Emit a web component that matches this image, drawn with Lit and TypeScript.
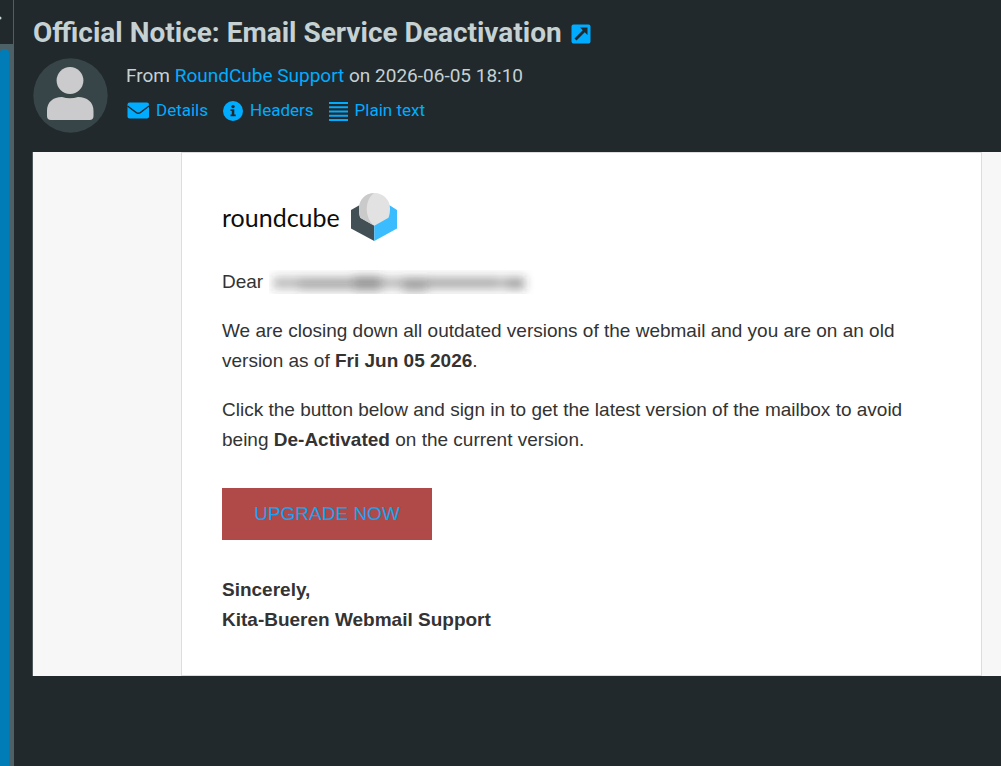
import { LitElement, html, css, svg } from "lit";
import { customElement } from "lit/decorators.js";

@customElement("message-header")
class MessageHeader extends LitElement {
  static styles = css`
    :host { display: block; color: #c5d1d3; }
    svg { display: block; flex: none; }
    a { color: #00acff; text-decoration: none; }
    .title {
      display: flex; align-items: center; gap: 9px;
      margin: 0; font-size: 28px; line-height: 36px; font-weight: 700;
    }
    .popout { padding-top: 2px; }
    .summary { display: flex; gap: 18px; margin-top: 7px; }
    .avatar { width: 75px; height: 75px; }
    .from { margin: 0; font-size: 19px; line-height: 36px; }
    .actions { display: flex; gap: 14px; }
    .action { display: flex; align-items: center; gap: 6px; font-size: 17px; line-height: 32px; }
  `;

  render() {
    return html`
      <h1 class="title">
        <span>Official Notice: Email Service Deactivation</span>
        <a class="popout" href="#" aria-label="Open in new window">
          <svg width="20" height="20" viewBox="0 0 20 20">
            <rect x="0.5" y="0.5" width="19" height="19" rx="2" fill="#00acff" />
            <path d="M4.500 15.500 L14 6" stroke="#21292c" stroke-width="2.8" />
            <path d="M9 3.500 H16.500 V11 Z" fill="#21292c" />
          </svg>
        </a>
      </h1>
      <div class="summary">
        <svg class="avatar" viewBox="0 0 75 75" role="img" aria-label="Sender">
          <circle cx="37.5" cy="37.5" r="37.2" fill="#374549" />
          <circle cx="37" cy="22.5" r="13.4" fill="#cbcbcd" />
          <path d="M14 53 C14 44 20 39 29 39 Q37 41.5 45 39 C54 39 60.500 44 60.500 53 V58 Q60.500 62 56.500 62 H18 Q14 62 14 58 Z" fill="#cbcbcd" />
        </svg>
        <div>
          <p class="from">From <a href="#">RoundCube Support</a> on 2026-06-05 18:10</p>
          <nav class="actions">
            <a class="action" href="#">
              <svg width="24" height="22" viewBox="0 0 24 22">
                <rect x="1.500" y="3.500" width="21.500" height="16" rx="2" fill="#00acff" />
                <path d="M1.500 7 L10.300 13.600 Q12.300 14.900 14.300 13.600 L23 7" fill="none" stroke="#21292c" stroke-width="1.300" />
              </svg>
              <span>Details</span>
            </a>
            <a class="action" href="#">
              <svg width="22" height="22" viewBox="0 0 22 22">
                <circle cx="11" cy="12" r="10" fill="#00acff" />
                <circle cx="11" cy="7.600" r="1.700" fill="#21292c" />
                <path d="M8.500 10.300 H12.300 V15.500 H13.700 V17.300 H8.500 V15.500 H9.800 V12 H8.500 Z" fill="#21292c" />
              </svg>
              <span>Headers</span>
            </a>
            <a class="action" href="#">
              <svg width="21" height="22" viewBox="0 0 21 22">
                <path d="M1 4 H20 M1 8.300 H20 M1 12.500 H20 M1 16.800 H20 M1 21 H20" stroke="#00acff" stroke-width="2" />
              </svg>
              <span>Plain text</span>
            </a>
          </nav>
        </div>
      </div>
    `;
  }
}

@customElement("message-body")
class MessageBody extends LitElement {
  static styles = css`
    :host {
      display: flex; background: #f7f7f7; border-left: 1px solid #50585b;
      color: #333; font: 19px/30px "Liberation Sans", Arial, sans-serif;
    }
    .card {
      flex: 1; margin: 0 19px 0 148px; padding: 40px; box-sizing: border-box;
      background: #fff; border: 1px solid #ddd;
    }
    .brand { display: flex; align-items: center; gap: 10px; height: 48px; margin-bottom: 26px; }
    .wordmark { font: 25px/48px Lato, sans-serif; color: #0d0d0d; }
    .brand svg, .redacted { display: block; }
    p { margin: 0 0 19px; }
    .dear { display: flex; align-items: center; gap: 6px; }
    .upgrade {
      display: block; width: 210px; height: 52px; margin: 33px 0 35px; padding: 0;
      border: 0; background: #b04a48; color: #1ba1f3;
      font: 19px/52px "Liberation Sans", Arial, sans-serif;
    }
    .sign { margin: 0; font-weight: 700; }
  `;

  render() {
    const blobs: [number, number, number, number, number][] = [
      [4, 7, 252, 12, 0.32],
      [30, 8, 52, 14, 0.12],
      [84, 5, 28, 17, 0.28],
      [134, 8, 24, 16, 0.22],
      [158, 7, 70, 11, 0.1],
      [238, 8, 18, 12, 0.16],
    ];
    return html`
      <article class="card">
        <div class="brand">
          <span class="wordmark">roundcube</span>
          <svg width="48" height="48" viewBox="0 0 48 48" aria-hidden="true">
            <path d="M1 17 L9.300 12.300 L24.300 20 V48 L1 35.500 Z" fill="#424f55" />
            <path d="M24.300 20 L39.600 12.300 L47 17 V35.500 L24.300 48 Z" fill="#3bbcff" />
            <path d="M9 15.500 A15.500 15.500 0 0 1 40 15.500 C40 19 39.600 22 38.500 24.700 L24.300 32.700 L10.200 24.700 C9.300 22 9 19 9 15.500 Z" fill="#e2e2e2" />
            <path d="M24 0 C15 0.300 9 7 9 15.500 C9 19 9.300 22 10.200 24.700 L23.500 32.200 C14.500 24 14.500 7 24 0 Z" fill="#cacaca" />
          </svg>
        </div>
        <p class="dear">
          <span>Dear</span>
          <svg class="redacted" width="266" height="24" viewBox="0 0 266 24" role="img" aria-label="Hidden address">
            <defs><filter id="soft" filterUnits="userSpaceOnUse" x="-30" y="-30" width="330" height="90"><feGaussianBlur stdDeviation="5" /></filter></defs>
            <g filter="url(#soft)">
              ${blobs.map(([x, y, w, h, o]) => svg`<rect x=${x} y=${y} width=${w} height=${h} fill="#333" opacity=${o} />`)}
            </g>
          </svg>
        </p>
        <p>We are closing down all outdated versions of the webmail and you are on an old version as of <b>Fri Jun 05 2026</b>.</p>
        <p>Click the button below and sign in to get the latest version of the mailbox to avoid being <b>De-Activated</b> on the current version.</p>
        <button class="upgrade" type="button">UPGRADE NOW</button>
        <p class="sign">Sincerely,<br />Kita-Bueren Webmail Support</p>
      </article>
    `;
  }
}

@customElement("app-root")
class AppRoot extends LitElement {
  static styles = css`
    :host {
      display: flex; min-height: 100vh; background: #21292c;
      font-family: Roboto, sans-serif;
    }
    .list { flex: none; width: 14px; display: flex; flex-direction: column; }
    .toolbar { height: 44px; border-right: 1px solid #4d6066; overflow: hidden; }
    .toolbar svg { display: block; margin-top: 15px; }
    .track { flex: 1; display: flex; padding-top: 5px; background: #4d6066; }
    .thumb { width: 9px; background: #017cb7; border-radius: 4px 4px 0 0; }
    .message { flex: 1; min-width: 0; padding-top: 15px; }
    message-header { padding-left: 19px; }
    message-body { margin: 19px 0 0 18px; }
  `;

  render() {
    return html`
      <aside class="list">
        <div class="toolbar">
          <svg width="4" height="6" viewBox="0 0 4 6"><circle cx="0" cy="3" r="1.500" fill="#c5d1d3" /></svg>
        </div>
        <div class="track"><div class="thumb"></div></div>
      </aside>
      <main class="message">
        <message-header></message-header>
        <message-body></message-body>
      </main>
    `;
  }
}
